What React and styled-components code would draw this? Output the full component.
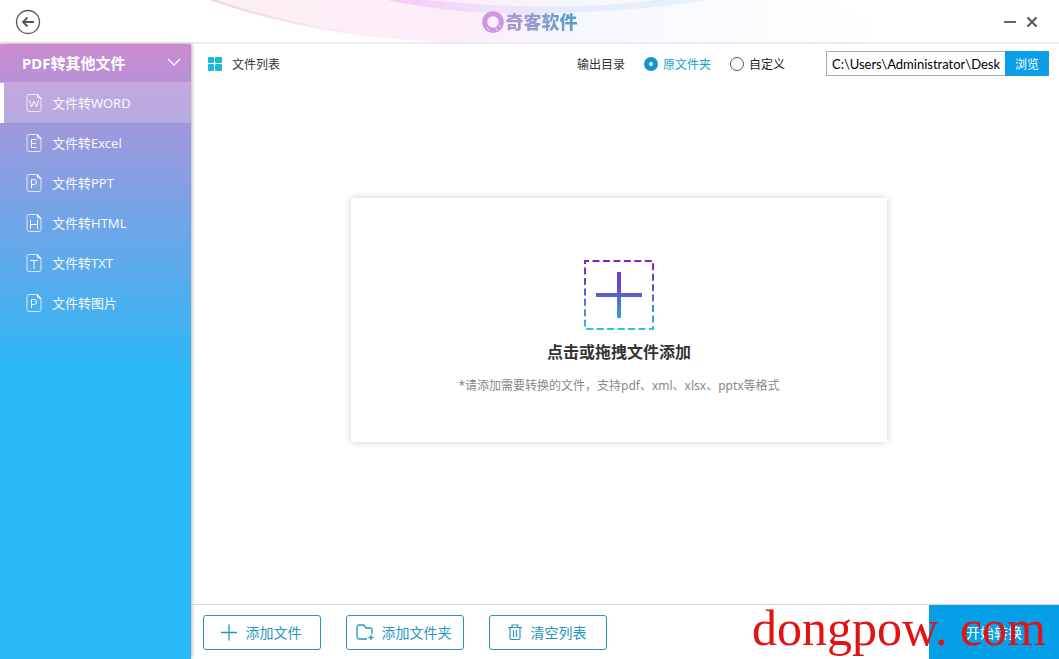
import React, { useState } from "react";
import styled, { createGlobalStyle } from "styled-components";

const MENU_ITEMS = [
  { id: "word", letter: "W", label: "文件转WORD" },
  { id: "excel", letter: "E", label: "文件转Excel" },
  { id: "ppt", letter: "P", label: "文件转PPT" },
  { id: "html", letter: "H", label: "文件转HTML" },
  { id: "txt", letter: "T", label: "文件转TXT" },
  { id: "image", letter: "P", label: "文件转图片" },
];

// strokes of the letter inside the file icon
const LETTER_PATHS = {
  W: "M4.500 7l2 7L9 8l2.500 6 2-7",
  E: "M11.500 6.500h-5v8h5M6.500 10.500h4.500",
  P: "M6.500 15V6.500H9a2.500 2.500 0 0 1 0 5H6.500",
  H: "M5.500 7v9M12.500 7v9M5.500 11.500h7",
  T: "M5 7.500h8M9 7.500V16",
};

const FileIcon = ({ letter }) => (
  <svg width="18" height="20" viewBox="0 0 18 20" fill="none" stroke="currentColor">
    <path
      d="M12.500 1.500H4a2 2 0 0 0-2 2v13a2 2 0 0 0 2 2h10a2 2 0 0 0 2-2V5z"
      strokeOpacity="0.8"
    />
    <path d="M12.500 1.500V4a1 1 0 0 0 1 1H16z" fill="currentColor" fillOpacity="0.6" />
    <path d={LETTER_PATHS[letter]} />
  </svg>
);

const HeaderWaves = () => (
  <Waves viewBox="0 0 1059 43" preserveAspectRatio="none" aria-hidden="true">
    <defs>
      <linearGradient id="wash" x1="0" x2="1">
        <stop offset="0" stopColor="#fdf0f4" />
        <stop offset="0.35" stopColor="#fdedf9" />
        <stop offset="0.55" stopColor="#f6f8fe" />
        <stop offset="1" stopColor="#ffffff" />
      </linearGradient>
      <linearGradient id="rim" x1="0" x2="1">
        <stop offset="0" stopColor="#f0d3da" />
        <stop offset="0.6" stopColor="#fce6ee" stopOpacity="0.500" />
        <stop offset="1" stopColor="#fdeaf5" stopOpacity="0" />
      </linearGradient>
      <linearGradient id="ribbon" x1="0" x2="1">
        <stop offset="0" stopColor="#fbc6f7" />
        <stop offset="0.3" stopColor="#efe0fb" />
        <stop offset="0.65" stopColor="#e4ecfc" />
        <stop offset="1" stopColor="#e6f3fd" />
      </linearGradient>
    </defs>
    <path d="M210 0C270 22 340 38 440 43H860C900 30 880 10 800 0z" fill="url(#wash)" />
    <path d="M210 0C270 22 340 38 440 43C350 36 280 22 216 0z" fill="url(#rim)" />
    <path d="M388 0C440 12 500 16 560 13C620 11 670 7 705 0H655C600 8 520 10 430 0z" fill="url(#ribbon)" />
  </Waves>
);

const App = () => {
  const [active, setActive] = useState("word");
  const [output, setOutput] = useState("source");
  const [path, setPath] = useState("C:\\Users\\Administrator\\Desk");

  return (
    <Window>
      <GlobalStyle />
      <Header>
        <HeaderWaves />
        <IconButton aria-label="返回">
          <svg width="26" height="26" viewBox="0 0 26 26" fill="none" stroke="#555">
            <circle cx="13" cy="13" r="11.500" strokeWidth="1.300" />
            <path d="M8 13h11M12.500 8.500L8 13l4.500 4.500" strokeWidth="1.800" />
          </svg>
        </IconButton>
        <Brand>
          <svg width="22" height="22" viewBox="0 0 22 22" fill="none">
            <circle cx="11" cy="11" r="8.300" stroke="#cb97e2" strokeWidth="5" />
            <path d="M13.500 16.500l2 3.500M5 17l3 2.500M17 15l2 1" stroke="#f3e2fa" />
          </svg>
          <BrandName>奇客软件</BrandName>
        </Brand>
        <WindowControls>
          <IconButton aria-label="最小化">
            <svg width="14" height="14" viewBox="0 0 14 14" stroke="#666" strokeWidth="2">
              <path d="M1 7h12" />
            </svg>
          </IconButton>
          <IconButton aria-label="关闭">
            <svg width="14" height="14" viewBox="0 0 14 14" stroke="#555" strokeWidth="2">
              <path d="M2.500 2.500l9 9M11.500 2.500l-9 9" />
            </svg>
          </IconButton>
        </WindowControls>
      </Header>

      <Body>
        <Sidebar>
          <GroupButton>
            PDF转其他文件
            <svg width="14" height="8" viewBox="0 0 14 8" fill="none" stroke="#fff">
              <path d="M1 1l6 6 6-6" strokeWidth="1.300" />
            </svg>
          </GroupButton>
          {MENU_ITEMS.map((item) => (
            <MenuButton
              key={item.id}
              $active={item.id === active}
              onClick={() => setActive(item.id)}
            >
              <FileIcon letter={item.letter} />
              <MenuLabel>{item.label}</MenuLabel>
            </MenuButton>
          ))}
        </Sidebar>

        <Main>
          <Toolbar>
            <ListTitle>
              <svg width="14" height="14" viewBox="0 0 14 14" fill="#1cb8dc">
                <rect width="6" height="6" rx="1" />
                <rect x="7" width="7" height="6" rx="1" />
                <rect y="7" width="6" height="7" rx="1" />
                <rect x="7" y="7" width="7" height="7" rx="1" />
              </svg>
              文件列表
            </ListTitle>
            <OutputLabel>输出目录</OutputLabel>
            <RadioLabel $checked={output === "source"}>
              <Radio
                type="radio"
                name="output"
                checked={output === "source"}
                onChange={() => setOutput("source")}
              />
              原文件夹
            </RadioLabel>
            <RadioLabel $checked={output === "custom"}>
              <Radio
                type="radio"
                name="output"
                checked={output === "custom"}
                onChange={() => setOutput("custom")}
              />
              自定义
            </RadioLabel>
            <PathField>
              <PathInput
                aria-label="输出目录"
                value={path}
                onChange={(e) => setPath(e.target.value)}
              />
              <BrowseButton>浏览</BrowseButton>
            </PathField>
          </Toolbar>

          <Content>
            <DropZone>
              <svg width="70" height="70" viewBox="0 0 70 70" fill="none">
                <defs>
                  <linearGradient id="add" gradientUnits="userSpaceOnUse" x1="0" y1="0" x2="0" y2="70">
                    <stop offset="0" stopColor="#8a1fb8" />
                    <stop offset="0.5" stopColor="#5560cf" />
                    <stop offset="1" stopColor="#2fc6d6" />
                  </linearGradient>
                </defs>
                <g stroke="url(#add)">
                  <path
                    d="M1.010 1L69 1.010L68.990 69L1 68.990z"
                    strokeWidth="2"
                    strokeDasharray="7 3.460"
                    strokeDashoffset="3"
                  />
                  <path d="M12 34.990L58 35.010M34.990 12L35.010 58" strokeWidth="4" />
                </g>
              </svg>
              <DropTitle>点击或拖拽文件添加</DropTitle>
              <DropHint>*请添加需要转换的文件，支持pdf、xml、xlsx、pptx等格式</DropHint>
            </DropZone>
          </Content>

          <Footer>
            <ActionButton>
              <svg width="18" height="18" viewBox="0 0 18 18" fill="none" stroke="currentColor">
                <path d="M1 9.500h16M9 1.500v16" strokeWidth="1.300" />
              </svg>
              添加文件
            </ActionButton>
            <ActionButton>
              <svg width="18" height="18" viewBox="0 0 18 18" fill="none" stroke="currentColor">
                <path
                  d="M11 16H3a2 2 0 0 1-2-2V4a2 2 0 0 1 2-2h4.500l2.500 3h4a2 2 0 0 1 2 2v4M15 12v5M12.500 14.500h5"
                  strokeWidth="1.300"
                />
              </svg>
              添加文件夹
            </ActionButton>
            <ActionButton>
              <svg width="16" height="18" viewBox="0 0 16 18" fill="none" stroke="currentColor">
                <path
                  d="M1 4.500h14M5 4V2h6v2M3 5v10a1.500 1.500 0 0 0 1.500 1.500h7a1.500 1.500 0 0 0 1.500-1.500V5M6.500 7v7M9.500 7v7"
                  strokeWidth="1.200"
                />
              </svg>
              清空列表
            </ActionButton>
            <StartButton>开始转换</StartButton>
            <Watermark>dongpow. com</Watermark>
          </Footer>
        </Main>
      </Body>
    </Window>
  );
};

const GlobalStyle = createGlobalStyle`
  * {
    box-sizing: border-box;
  }

  body {
    margin: 0;
  }

  body,
  button,
  input {
    font-family: "Noto Sans", "Noto Sans CJK SC", sans-serif;
  }

  button {
    padding: 0;
    border: 0;
    background: none;
    cursor: pointer;
  }

  svg {
    flex-shrink: 0;
  }
`;

const Window = styled.div`
  display: flex;
  flex-direction: column;
  min-height: 100vh;
  background: #fff;
  color: #333;
  font-size: 12px;
`;

const Header = styled.header`
  position: relative;
  display: grid;
  grid-template-columns: 1fr auto 1fr;
  align-items: center;
  height: 44px;
  padding: 2px 15px 0;
  border-bottom: 2px solid #ececec;
`;

const Waves = styled.svg`
  position: absolute;
  inset: 0;
  width: 100%;
  height: 100%;
`;

const IconButton = styled.button`
  position: relative;
  display: flex;
  justify-self: start;
`;

const Brand = styled.div`
  position: relative;
  display: flex;
  align-items: center;
  gap: 2px;
`;

const BrandName = styled.span`
  background: linear-gradient(90deg, #b094d8, #8b9fd2 50%, #4f9fca);
  background-clip: text;
  color: transparent;
  font-size: 18px;
  font-weight: 900;
  line-height: 24px;
`;

const WindowControls = styled.div`
  display: flex;
  justify-content: flex-end;
  gap: 8px;
  padding-right: 5px;
`;

const Body = styled.div`
  display: flex;
  flex: 1;
`;

const Sidebar = styled.nav`
  position: relative;
  width: 191px;
  flex-shrink: 0;
  background: linear-gradient(#cb8bd0, #a297dc 80px, #6fa5e8 180px, #4bafee 260px, #2bb8f7 328px);
  box-shadow: 1px 0 3px rgba(0, 0, 0, 0.3);
`;

const GroupButton = styled.button`
  display: flex;
  align-items: center;
  justify-content: space-between;
  width: 100%;
  height: 39px;
  padding: 0 10px 2px 22px;
  border-bottom: 1px solid rgba(255, 255, 255, 0.2);
  color: #fff;
  font-size: 15px;
  font-weight: 700;
`;

const MenuButton = styled.button`
  display: flex;
  align-items: center;
  gap: 9px;
  width: 100%;
  height: 40px;
  padding-left: 21px;
  border-left: 4px solid ${({ $active }) => ($active ? "#fff" : "transparent")};
  background: ${({ $active }) => ($active ? "rgba(255, 255, 255, 0.2)" : "none")};
  background-clip: padding-box;
  color: #f4faff;
  font-size: 13px;
`;

const MenuLabel = styled.span`
  padding-bottom: 2px;
`;

const Main = styled.main`
  display: flex;
  flex: 1;
  flex-direction: column;
  min-width: 0;
`;

const Toolbar = styled.div`
  display: flex;
  align-items: center;
  height: 39px;
  padding: 0 10px 0 17px;
`;

const ListTitle = styled.div`
  display: flex;
  align-items: center;
  gap: 10px;
  margin-right: auto;
`;

const OutputLabel = styled.span`
  margin-right: 19px;
`;

const RadioLabel = styled.label`
  display: flex;
  align-items: center;
  gap: 5px;
  margin-right: 19px;
  color: ${({ $checked }) => ($checked ? "#1a9fd0" : "#222")};
`;

const Radio = styled.input`
  appearance: none;
  width: 14px;
  height: 14px;
  margin: 0;
  border: 1px solid #555;
  border-radius: 50%;

  &:checked {
    border: 5px solid #1296d2;
  }
`;

const PathField = styled.div`
  display: flex;
  width: 223px;
  height: 25px;
  margin-left: 22px;
`;

const PathInput = styled.input`
  flex: 1;
  min-width: 0;
  padding: 0 0 0 5px;
  border: 1px solid #aaa;
  border-right: 0;
  color: #000;
  font-family: Lato, "Noto Sans CJK SC", sans-serif;
  font-size: 13px;
`;

const BrowseButton = styled.button`
  width: 44px;
  background: #0c9de8;
  color: #fff;
  font-size: 12px;
`;

const Content = styled.div`
  display: flex;
  flex: 1;
  align-items: center;
  justify-content: center;
  padding: 0 12px 47px 0;
`;

const DropZone = styled.button`
  display: flex;
  flex-direction: column;
  align-items: center;
  width: 80%;
  max-width: 536px;
  padding: 62px 0 46px;
  background: #fff;
  box-shadow: 0 0 7px rgba(0, 0, 0, 0.2);
`;

const DropTitle = styled.span`
  margin-top: 10px;
  color: #333;
  font-size: 16px;
  font-weight: 700;
  line-height: 24px;
`;

const DropHint = styled.span`
  margin-top: 12px;
  color: #888;
  font-size: 12px;
  line-height: 20px;
`;

const Footer = styled.footer`
  position: relative;
  display: flex;
  align-items: center;
  gap: 25px;
  height: 55px;
  padding-left: 12px;
  border-top: 1px solid #d8d8d8;
`;

const ActionButton = styled.button`
  display: flex;
  align-items: center;
  justify-content: center;
  gap: 8px;
  width: 118px;
  height: 35px;
  padding-right: 3px;
  border: 1px solid #2b93b8;
  border-radius: 3px;
  color: #2596c0;
  font-size: 14px;
`;

const StartButton = styled.button`
  align-self: stretch;
  width: 130px;
  margin-left: auto;
  background: #05a0e8;
  color: #fff;
  font-size: 14px;
`;

const Watermark = styled.span`
  position: absolute;
  right: 13px;
  bottom: 3px;
  color: #e01414;
  font-family: "Liberation Serif", serif;
  font-size: 50px;
  line-height: 56px;
  white-space: pre;
  pointer-events: none;
`;

export default App;
